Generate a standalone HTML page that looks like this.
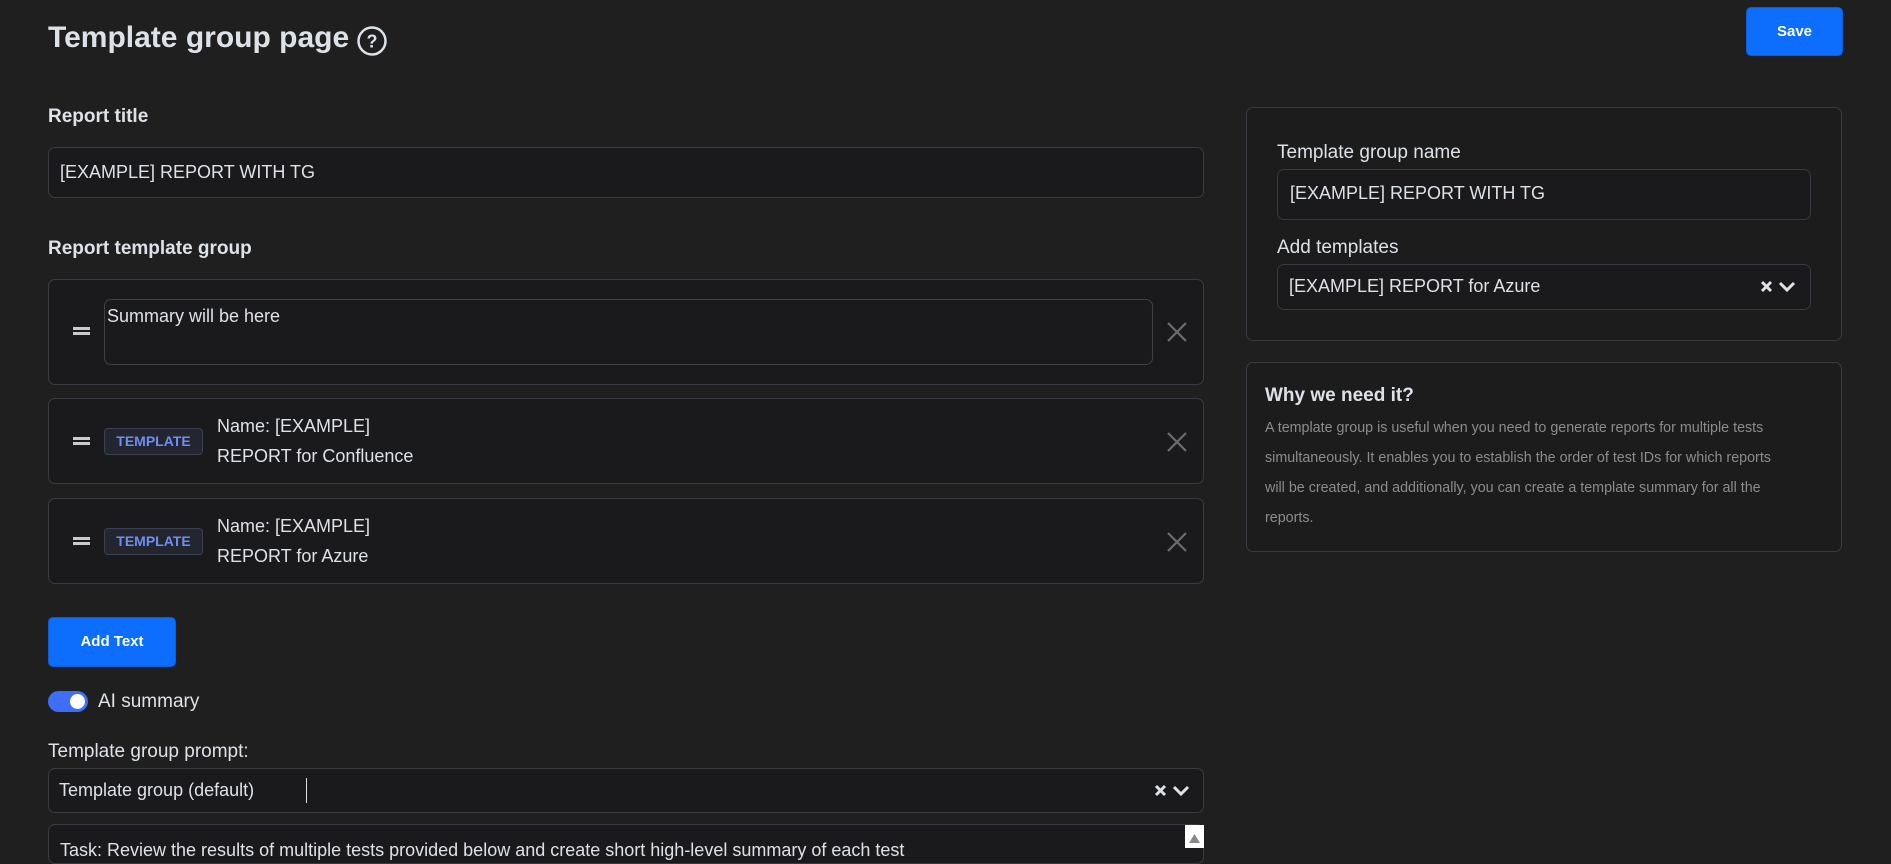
<!DOCTYPE html>
<html><head><meta charset="utf-8"><style>
*{box-sizing:border-box;margin:0;padding:0}
body{width:1891px;height:848px;overflow:hidden;background:#1f1f1f;font-family:"Liberation Sans",sans-serif;color:#dde1e8;position:relative}
.a{position:absolute}
.box{position:absolute;background:#1a1a1c;border:1px solid #3a3b40;border-radius:7px}
.lbl{position:absolute;font-size:19px;font-weight:bold;color:#dde1e8}
.t18{font-size:18px}
.x{position:absolute;width:22px;height:22px}
.handle{position:absolute;width:17px;height:8px;border-top:3px solid #c8cbd0;border-bottom:3px solid #c8cbd0}
.badge{position:absolute;width:99px;height:27px;border:1px solid #3b4150;background:#23262e;border-radius:4px;color:#6f8ef5;font-size:14px;font-weight:bold;text-align:center;line-height:25px}
.btn{position:absolute;background:#0d6efd;color:#fff;font-weight:bold;font-size:15px;border-radius:5px;text-align:center;border:1px solid #0b5ed7}
</style></head><body>
<div class="a" style="left:48px;top:21px;font-size:30px;font-weight:bold;color:#dde1e8">Template group page</div>
<svg class="a" style="left:356px;top:25px" width="32" height="32" viewBox="0 0 32 32"><circle cx="16" cy="16" r="13.5" fill="none" stroke="#dde1e8" stroke-width="2.5"/><text x="16" y="22.5" text-anchor="middle" font-family="Liberation Sans" font-weight="bold" font-size="18" fill="#dde1e8">?</text></svg>
<div class="btn" style="left:1746px;top:7px;width:97px;height:49px;line-height:47px">Save</div>

<div class="lbl" style="left:48px;top:106px">Report title</div>
<div class="box" style="left:48px;top:147px;width:1156px;height:51px"></div>
<div class="a t18" style="left:60px;top:162px">[EXAMPLE] REPORT WITH TG</div>

<div class="lbl" style="left:48px;top:238px">Report template group</div>
<div class="box" style="left:48px;top:279px;width:1156px;height:106px"></div>
<div class="handle" style="left:73px;top:327px"></div>
<div class="box" style="left:104px;top:299px;width:1049px;height:66px;border-color:#404146"></div>
<div class="a t18" style="left:107px;top:306px">Summary will be here</div>
<svg class="x" style="left:1166px;top:321px" viewBox="0 0 22 22"><path d="M2 2L20 20M20 2L2 20" stroke="#6b6c70" stroke-width="2.2"/></svg>

<div class="box" style="left:48px;top:398px;width:1156px;height:86px"></div>
<div class="handle" style="left:73px;top:437px"></div>
<div class="badge" style="left:104px;top:428px">TEMPLATE</div>
<div class="a t18" style="left:217px;top:411px;line-height:30px">Name: [EXAMPLE]<br>REPORT for Confluence</div>
<svg class="x" style="left:1166px;top:431px" viewBox="0 0 22 22"><path d="M2 2L20 20M20 2L2 20" stroke="#6b6c70" stroke-width="2.2"/></svg>

<div class="box" style="left:48px;top:498px;width:1156px;height:86px"></div>
<div class="handle" style="left:73px;top:537px"></div>
<div class="badge" style="left:104px;top:528px">TEMPLATE</div>
<div class="a t18" style="left:217px;top:511px;line-height:30px">Name: [EXAMPLE]<br>REPORT for Azure</div>
<svg class="x" style="left:1166px;top:531px" viewBox="0 0 22 22"><path d="M2 2L20 20M20 2L2 20" stroke="#6b6c70" stroke-width="2.2"/></svg>

<div class="btn" style="left:48px;top:617px;width:128px;height:50px;line-height:48px">Add Text</div>
<div class="a" style="left:48px;top:691px;width:40px;height:21px;background:#3d6ef5;border-radius:11px"><div class="a" style="left:22px;top:3px;width:15px;height:15px;background:#fff;border-radius:50%"></div></div>
<div class="a t18" style="left:98px;top:691px;font-size:19px">AI summary</div>

<div class="a" style="left:48px;top:741px;font-size:19px">Template group prompt:</div>
<div class="box" style="left:48px;top:768px;width:1156px;height:45px"></div>
<div class="a t18" style="left:59px;top:780px">Template group (default)</div>
<div class="a" style="left:306px;top:778px;width:1px;height:25px;background:#ddd"></div>
<svg class="a" style="left:1154px;top:782px" width="44" height="18" viewBox="0 0 44 18"><path d="M2 4L11 13M11 4L2 13" stroke="#dde1e8" stroke-width="3"/><path d="M20 5L27 12L34 5" fill="none" stroke="#dde1e8" stroke-width="3"/></svg>
<div class="box" style="left:48px;top:824px;width:1156px;height:40px"></div>
<div class="a" style="left:1185px;top:825px;width:19px;height:23px;background:#fff"><svg width="19" height="23"><path d="M4 18L9.5 9L15 18Z" fill="#888"/></svg></div>
<div class="a t18" style="left:60px;top:840px">Task: Review the results of multiple tests provided below and create short high-level summary of each test</div>

<div class="box" style="left:1246px;top:107px;width:596px;height:234px;background:#1c1c1d"></div>
<div class="a t18" style="left:1277px;top:142px;font-size:19px">Template group name</div>
<div class="box" style="left:1277px;top:169px;width:534px;height:51px"></div>
<div class="a t18" style="left:1290px;top:183px">[EXAMPLE] REPORT WITH TG</div>
<div class="a t18" style="left:1277px;top:237px;font-size:19px">Add templates</div>
<div class="box" style="left:1277px;top:264px;width:534px;height:46px"></div>
<div class="a t18" style="left:1289px;top:276px">[EXAMPLE] REPORT for Azure</div>
<svg class="a" style="left:1760px;top:278px" width="46" height="18" viewBox="0 0 46 18"><path d="M2 4L11 13M11 4L2 13" stroke="#dde1e8" stroke-width="3"/><path d="M20 5L27 12L34 5" fill="none" stroke="#dde1e8" stroke-width="3"/></svg>

<div class="box" style="left:1246px;top:362px;width:596px;height:190px;background:#1c1c1d"></div>
<div class="a" style="left:1265px;top:385px;font-size:19px;font-weight:bold">Why we need it?</div>
<div class="a" style="left:1265px;top:413px;white-space:nowrap;font-size:14.3px;line-height:30px;color:#8c8c8f">A template group is useful when you need to generate reports for multiple tests<br>simultaneously. It enables you to establish the order of test IDs for which reports<br>will be created, and additionally, you can create a template summary for all the<br>reports.</div>
</body></html>
